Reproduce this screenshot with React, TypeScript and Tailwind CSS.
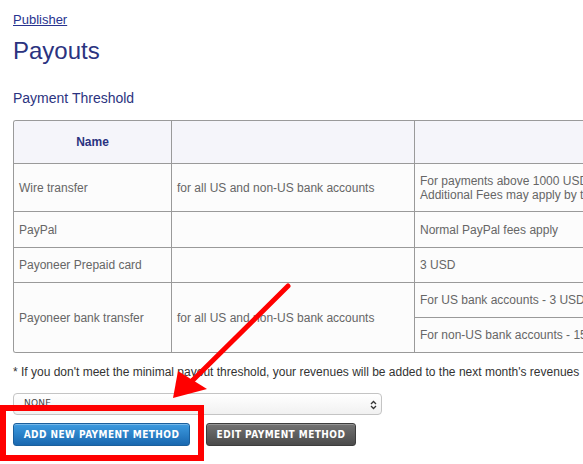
import React from "react";

const cell = "flex items-center px-[5px] border-r border-b border-[#9a9a9a]";

export default function App() {
  return (
    <div className="relative w-[583px] h-[464px] overflow-hidden bg-white font-['Liberation_Sans',Arial,sans-serif]">
      <div className="pl-[13px] pt-[12px]">
        <a href="#" className="block w-fit text-[13px] leading-[15px] text-[#28338f] underline">
          Publisher
        </a>
        <h1 className="mt-[10px] text-[24px] leading-[28px] text-[#2b3380] font-normal">Payouts</h1>
        <h2 className="mt-[25px] text-[14px] leading-[16px] text-[#2b3380] font-normal">Payment Threshold</h2>

        <div className="mt-[14px] w-[720px] border-l border-t border-b border-[#9a9a9a] rounded-l-[3px] overflow-hidden text-[12px] leading-[14px] text-[#666]">
          <div className="grid grid-cols-[158px_243px_318px] grid-rows-[43px_48px_36px_35px_35px_34px]">
            <div className={`${cell} justify-center bg-[#f5f5fa] font-bold text-[#2b3380]`}>Name</div>
            <div className={`${cell} bg-[#f5f5fa]`}></div>
            <div className={`${cell} bg-[#f5f5fa]`}></div>

            <div className={`${cell} bg-[#fcfcfc]`}>Wire transfer</div>
            <div className={`${cell} bg-[#fcfcfc]`}>for all US and non-US bank accounts</div>
            <div className={`${cell} bg-[#fcfcfc] whitespace-nowrap`}>
              <span>
                For payments above 1000 USD - no fees
                <br />
                Additional Fees may apply by the receiving bank
              </span>
            </div>

            <div className={`${cell} bg-[#fcfcfc]`}>PayPal</div>
            <div className={`${cell} bg-[#fcfcfc]`}></div>
            <div className={`${cell} bg-[#fcfcfc]`}>Normal PayPal fees apply</div>

            <div className={`${cell} bg-[#fcfcfc]`}>Payoneer Prepaid card</div>
            <div className={`${cell} bg-[#fcfcfc]`}></div>
            <div className={`${cell} bg-[#fcfcfc]`}>3 USD</div>

            <div className={`${cell} row-span-2 bg-[#fcfcfc] border-b-0`}>Payoneer bank transfer</div>
            <div className={`${cell} row-span-2 bg-[#fcfcfc] border-b-0`}>for all US and non-US bank accounts</div>
            <div className={`${cell} bg-[#fcfcfc] whitespace-nowrap`}>For US bank accounts - 3 USD</div>
            <div className={`${cell} bg-[#fcfcfc] border-b-0 whitespace-nowrap`}>For non-US bank accounts - 15 USD</div>
          </div>
        </div>

        <p className="mt-[12px] text-[12px] leading-[14px] text-[#333] whitespace-nowrap">
          * If you don't meet the minimal payout threshold, your revenues will be added to the next month's revenues
        </p>

        <div className="mt-[14px] relative w-[369px] h-[22px] rounded-[4px] border border-[#c4c4c4] bg-gradient-to-b from-white to-[#f1f1f1] flex items-center pl-[10px]">
          <span className="text-[9px] text-[#444] tracking-[0.2px] font-['DejaVu_Sans',sans-serif]">NONE</span>
          <svg className="absolute right-[4px] top-[6px]" width="7" height="10" viewBox="0 0 7 10">
            <path d="M1 4 L3.5 1.5 L6 4" fill="none" stroke="#333" strokeWidth="1.3" />
            <path d="M1 6 L3.5 8.5 L6 6" fill="none" stroke="#333" strokeWidth="1.3" />
          </svg>
        </div>

        <div className="mt-[8px] flex gap-[16px]">
          <button className="h-[23px] w-[177px] rounded-[3px] border border-[#1b5f9c] bg-gradient-to-b from-[#3d9be0] to-[#1968b0] text-white text-[10px] font-bold tracking-[0.45px] font-['DejaVu_Sans_Condensed','DejaVu_Sans',sans-serif] shadow-[inset_0_1px_0_rgba(255,255,255,0.3)]">
            ADD NEW PAYMENT METHOD
          </button>
          <button className="h-[23px] w-[150px] rounded-[3px] border border-[#3d3d3d] bg-gradient-to-b from-[#737373] to-[#4b4b4b] text-white text-[10px] font-bold tracking-[0.45px] font-['DejaVu_Sans_Condensed','DejaVu_Sans',sans-serif] shadow-[inset_0_1px_0_rgba(255,255,255,0.25)]">
            EDIT PAYMENT METHOD
          </button>
        </div>
      </div>

      {/* annotation overlays */}
      <div className="absolute left-0 top-[405px] w-[204px] h-[56px] border-[6px] border-[#ff0000]" />
      <svg className="absolute left-0 top-0 pointer-events-none" width="583" height="464" viewBox="0 0 583 464">
        <line x1="288" y1="286" x2="192" y2="381" stroke="#ff0000" strokeWidth="5" strokeLinecap="round" />
        <polygon points="173,398 178,371 207,389" fill="#ff0000" />
      </svg>
    </div>
  );
}
